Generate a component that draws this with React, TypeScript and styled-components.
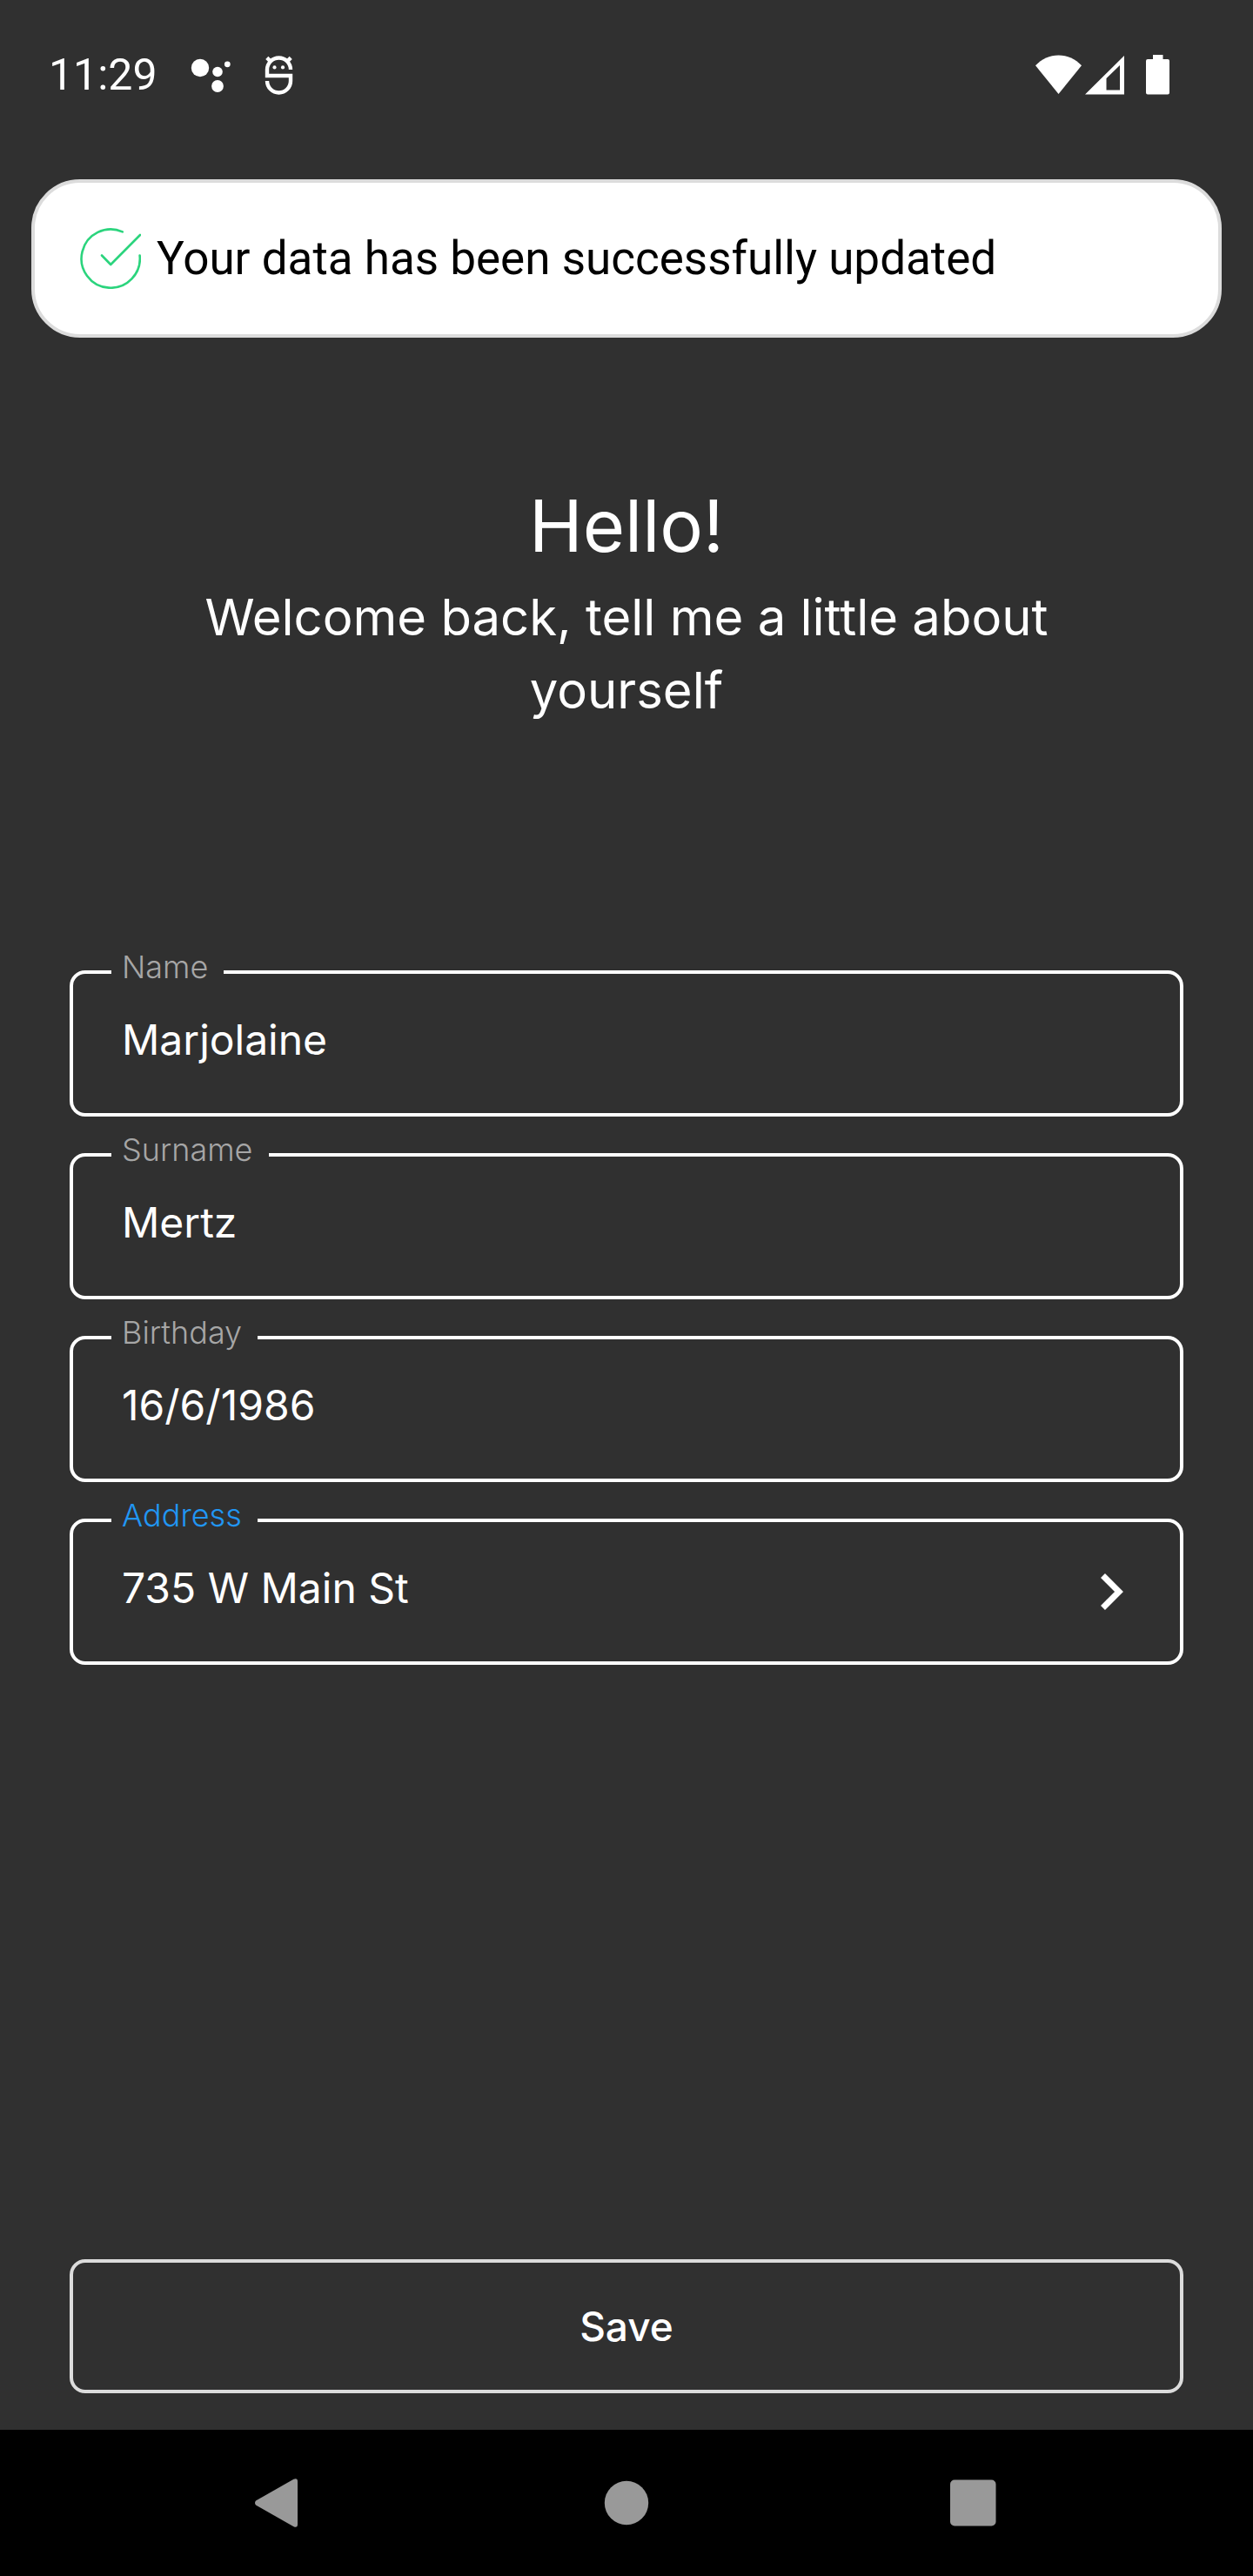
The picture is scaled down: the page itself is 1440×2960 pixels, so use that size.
import React, { useState } from "react";
import styled, { createGlobalStyle } from "styled-components";

const color = {
  surface: "#303030",
  line: "#ffffff",
  softLine: "#dcdcdc",
  muted: "#a6a6a6",
  accent: "#2196f3",
  success: "#2bd47d",
  nav: "#999999",
};

const GlobalStyle = createGlobalStyle`
  *, *::before, *::after { box-sizing: border-box; }
  body {
    margin: 0;
    background: ${color.surface};
    color: #ffffff;
    font-family: Inter, "Liberation Sans", sans-serif;
  }
`;

const Screen = styled.div`
  display: flex;
  flex-direction: column;
  min-height: 100vh;
`;

const StatusBar = styled.header`
  display: flex;
  align-items: center;
  justify-content: space-between;
  height: 172px;
  padding: 0 96px 0 56px;
`;

const StatusGroup = styled.div<{ $gap: number }>`
  display: flex;
  align-items: center;
  gap: ${(p) => p.$gap}px;

  svg { display: block; }
`;

const Clock = styled.time`
  margin-right: 2px;
  font-family: Roboto, "Liberation Sans", sans-serif;
  font-size: 50px;
  line-height: 58px;
`;

const Toast = styled.div`
  display: flex;
  align-items: center;
  gap: 18px;
  margin: 34px 36px 0;
  padding: 52px;
  border: 4px solid ${color.softLine};
  border-radius: 56px;
  background: #ffffff;
  color: #000000;
  font-family: Roboto, "Liberation Sans", sans-serif;
  font-size: 53px;
  line-height: 70px;

  svg { flex: none; }
`;

const Hero = styled.section`
  padding: 160px 140px 0;
  text-align: center;
`;

const Title = styled.h1`
  margin: 0 0 7px;
  font-size: 83px;
  font-weight: 400;
  line-height: 112px;
`;

const Subtitle = styled.p`
  margin: 0;
  font-size: 58px;
  font-weight: 400;
  line-height: 84px;
`;

const Form = styled.form`
  display: flex;
  flex: 1;
  flex-direction: column;
  gap: 42px;
  padding: 280px 80px 42px;
`;

const FieldBox = styled.div`
  position: relative;
  display: flex;
  align-items: center;
  height: 168px;
  padding: 0 50px 0 56px;
  border: 4px solid ${color.line};
  border-radius: 18px;
`;

const FieldLabel = styled.label<{ $active?: boolean }>`
  position: absolute;
  top: -28px;
  left: 44px;
  padding: 0 18px 0 12px;
  background: ${color.surface};
  color: ${(p) => (p.$active ? color.accent : color.muted)};
  font-size: 36px;
  font-weight: 300;
  line-height: 40px;
`;

const FieldInput = styled.input`
  flex: 1;
  min-width: 0;
  padding: 0 0 8px;
  border: 0;
  outline: 0;
  background: transparent;
  color: inherit;
  font-family: inherit;
  font-size: 48px;
  font-weight: 400;
  line-height: 60px;
`;

const PickButton = styled.button`
  display: grid;
  place-items: center;
  width: 56px;
  height: 56px;
  padding: 0;
  border: 0;
  background: transparent;
  color: inherit;
`;

const SaveButton = styled.button`
  height: 154px;
  margin-top: auto;
  border: 4px solid ${color.softLine};
  border-radius: 18px;
  background: transparent;
  color: inherit;
  font-family: inherit;
  font-size: 46px;
  font-weight: 500;
  line-height: 60px;
`;

const NavBar = styled.nav`
  display: grid;
  grid-template-columns: repeat(3, 1fr);
  height: 168px;
  padding: 0 120px;
  background: #000000;
`;

const NavButton = styled.button`
  display: grid;
  place-items: center;
  padding: 0;
  border: 0;
  background: transparent;
  color: ${color.nav};
`;

const AssistantIcon = () => (
  <svg width="47" height="48" viewBox="0 0 47 48" fill="currentColor" aria-hidden="true">
    <circle cx="11" cy="16" r="10.2" />
    <circle cx="31" cy="20.5" r="5.8" />
    <circle cx="42.3" cy="11.8" r="3.4" />
    <circle cx="31" cy="37" r="6.9" />
  </svg>
);

const DebugIcon = () => (
  <svg width="38" height="48" viewBox="0 0 38 48" fill="none" stroke="currentColor" strokeWidth="4.4" aria-hidden="true">
    <path d="M32 18A13.5 13.5 0 0 0 5 18V25H32V31A13.5 13.5 0 0 1 5 31" />
    <path d="M4.8 4.4L9 8.6M32.2 4.4L28 8.6" />
    <circle cx="13.5" cy="15.4" r="2.1" fill="currentColor" stroke="none" />
    <circle cx="23" cy="15.4" r="2.1" fill="currentColor" stroke="none" />
  </svg>
);

const WifiIcon = () => (
  <svg width="53" height="46" viewBox="0 0 53 46" fill="currentColor" aria-hidden="true">
    <path d="M0 12.3C7 4.8 16.5 .5 26.5 .5S46 4.8 53 12.3L26.5 45Z" />
  </svg>
);

const SignalIcon = () => (
  <svg width="46" height="46" viewBox="0 0 46 46" fill="currentColor" fillRule="evenodd" aria-hidden="true">
    <path d="M0 45.5L45 1V45.5ZM24.5 27V40.5H40V12Z" />
  </svg>
);

const BatteryIcon = () => (
  <svg width="27" height="46" viewBox="0 0 27 46" fill="currentColor" aria-hidden="true">
    <path d="M8 0H19.5V5H25Q27 5 27 7V43.5Q27 45.5 25 45.5H2Q0 45.5 0 43.5V7Q0 5 2 5H8Z" />
  </svg>
);

const CheckIcon = () => (
  <svg width="70" height="70" viewBox="0 0 70 70" fill="none" stroke={color.success} strokeWidth="2.6" strokeLinecap="round" strokeLinejoin="round" aria-hidden="true">
    <path d="M48.8 4.4A33.6 33.6 0 1 0 68.6 31.5" />
    <path d="M25 31.5L35.2 42L69 8" />
  </svg>
);

const ChevronIcon = () => (
  <svg width="28" height="44" viewBox="0 0 28 44" fill="none" stroke="currentColor" strokeWidth="7" aria-hidden="true">
    <path d="M3.5 3.5L22 22L3.5 40.5" />
  </svg>
);

const BackIcon = () => (
  <svg width="56" height="56" viewBox="0 0 56 56" fill="currentColor" aria-hidden="true">
    <path d="M2 25.5L45.5 .8Q50 -1 50 3.5V52.5Q50 57 45.5 55.2L2 30.5Q0 28 2 25.5Z" />
  </svg>
);

const HomeIcon = () => (
  <svg width="52" height="52" viewBox="0 0 52 52" fill="currentColor" aria-hidden="true">
    <circle cx="26" cy="26" r="25.2" />
  </svg>
);

const RecentIcon = () => (
  <svg width="56" height="54" viewBox="0 0 56 54" fill="currentColor" aria-hidden="true">
    <rect x="0" y="0.5" width="52.5" height="53" rx="5" />
  </svg>
);

type FieldProps = {
  id: string;
  label: string;
  initial: string;
  active?: boolean;
  picker?: boolean;
};

const Field = ({ id, label, initial, active, picker }: FieldProps) => {
  const [value, setValue] = useState(initial);
  return (
    <FieldBox>
      <FieldLabel htmlFor={id} $active={active}>{label}</FieldLabel>
      <FieldInput id={id} value={value} onChange={(e) => setValue(e.target.value)} />
      {picker && (
        <PickButton type="button" aria-label="Choose address">
          <ChevronIcon />
        </PickButton>
      )}
    </FieldBox>
  );
};

const fields: FieldProps[] = [
  { id: "name", label: "Name", initial: "Marjolaine" },
  { id: "surname", label: "Surname", initial: "Mertz" },
  { id: "birthday", label: "Birthday", initial: "16/6/1986" },
  { id: "address", label: "Address", initial: "735 W Main St", active: true, picker: true },
];

export default function App() {
  return (
    <>
      <GlobalStyle />
      <Screen>
        <StatusBar>
          <StatusGroup $gap={36}>
            <Clock>11:29</Clock>
            <AssistantIcon />
            <DebugIcon />
          </StatusGroup>
          <StatusGroup $gap={4}>
            <WifiIcon />
            <StatusGroup $gap={24}>
              <SignalIcon />
              <BatteryIcon />
            </StatusGroup>
          </StatusGroup>
        </StatusBar>
        <Toast role="status">
          <CheckIcon />
          Your data has been successfully updated
        </Toast>
        <Hero>
          <Title>Hello!</Title>
          <Subtitle>Welcome back, tell me a little about yourself</Subtitle>
        </Hero>
        <Form onSubmit={(e) => e.preventDefault()}>
          {fields.map((field) => (
            <Field key={field.id} {...field} />
          ))}
          <SaveButton type="submit">Save</SaveButton>
        </Form>
        <NavBar aria-label="System">
          <NavButton type="button" aria-label="Back"><BackIcon /></NavButton>
          <NavButton type="button" aria-label="Home"><HomeIcon /></NavButton>
          <NavButton type="button" aria-label="Recent apps"><RecentIcon /></NavButton>
        </NavBar>
      </Screen>
    </>
  );
}
